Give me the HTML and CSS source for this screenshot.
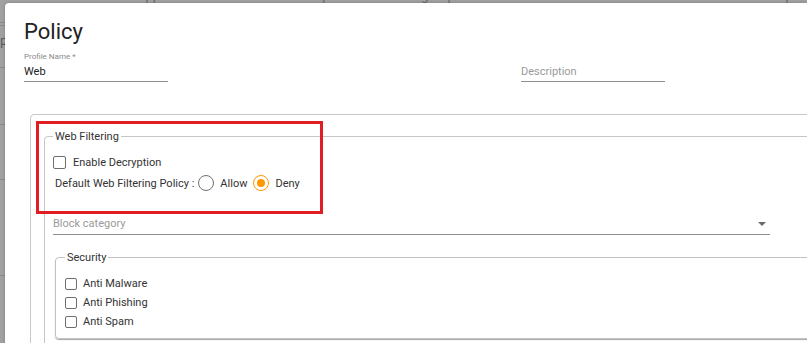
FILE: index.html
```html
<!DOCTYPE html>
<html>
<head>
<meta charset="utf-8">
<link rel="stylesheet" href="styles.css">
</head>
<body>
<div class="backdrop">
  <div class="bg-head">
    <span>Clients</span><span>Applications</span><span>SSL Bump</span><span>Usergroups</span><span>Time</span><span>Profiles</span><span>Captive</span>
  </div>
  <div class="bg-row r1"></div>
  <div class="bg-row r2"></div>
  <div class="bg-row r3"><span class="bg-text">Op</span></div>
  <div class="bg-row r4"></div>
  <div class="bg-row r5"></div>
  <div class="bg-row r6"></div>
</div>

<div class="modal">
  <h1 class="title">Policy</h1>
  <div class="fields">
    <div class="field">
      <div class="field-label">Profile Name *</div>
      <div class="field-input">Web</div>
    </div>
    <div class="field">
      <div class="field-label"></div>
      <div class="field-input placeholder">Description</div>
    </div>
  </div>

  <div class="outer-box">
    <fieldset class="group wf">
      <legend>Web Filtering</legend>
      <div class="row check-row">
        <span class="checkbox big"></span><span>Enable Decryption</span>
      </div>
      <div class="row policy-row">
        <span class="policy-label">Default Web Filtering Policy :</span>
        <span class="radio"></span><span class="radio-label">Allow</span>
        <span class="radio on"></span><span class="radio-label">Deny</span>
      </div>
      <div class="select">
        <span class="placeholder">Block category</span>
        <span class="arrow"></span>
      </div>
      <fieldset class="group security">
        <legend>Security</legend>
        <div class="row check-row"><span class="checkbox"></span><span>Anti Malware</span></div>
        <div class="row check-row"><span class="checkbox"></span><span>Anti Phishing</span></div>
        <div class="row check-row"><span class="checkbox"></span><span>Anti Spam</span></div>
      </fieldset>
    </fieldset>
  </div>
</div>

<div class="annotation"></div>
</body>
</html>
```

FILE: styles.css
```css
html, body {
  margin: 0;
  padding: 0;
}
body {
  position: relative;
  width: 807px;
  height: 343px;
  overflow: hidden;
  background: #a1a1a1;
  font-family: Roboto, "Liberation Sans", sans-serif;
  color: #333;
}

/* page behind the dialog */
.backdrop {
  display: flex;
  flex-direction: column;
}
.bg-head {
  display: grid;
  grid-template-columns: 120px 133px 125px 133px 129px 113px 80px;
  padding-left: 17px;
  margin-top: -11px;
  height: 14px;
  font-size: 13px;
  line-height: 14px;
  color: #6a6a6a;
  white-space: nowrap;
  overflow: hidden;
}
.bg-row {
  border-bottom: 1px solid #8c8c8c;
  position: relative;
  overflow: hidden;
}
.r1 { height: 19px; }
.r2 { height: 2px; }
.r3 { height: 41px; }
.r4 { height: 56px; }
.r5 { height: 54px; }
.r6 { height: 95px; }
.bg-text {
  display: block;
  margin-left: -8px;
  margin-top: 8px;
  font-size: 12px;
  line-height: 14px;
  color: #555;
}

/* dialog */
.modal {
  position: absolute;
  left: 5px;
  top: 3px;
  width: 1000px;
  height: 420px;
  background: #fff;
  border-radius: 4px 0 0 0;
  box-shadow: 0 0 3px rgba(0, 0, 0, 0.25);
  padding: 16px 0 0 19px;
  box-sizing: border-box;
}
.title {
  margin: 0;
  font-size: 22px;
  line-height: 26px;
  font-weight: 400;
  color: #222;
}
.fields {
  display: flex;
  gap: 353px;
  margin-top: 7px;
}
.field {
  width: 144px;
}
.field-label {
  height: 10px;
  font-size: 8px;
  line-height: 10px;
  color: #8a8a8a;
}
.field-input {
  font-size: 11px;
  line-height: 14px;
  padding: 3px 0 2px;
  border-bottom: 1px solid #8f8f8f;
  color: #222;
}
.placeholder {
  color: #9a9a9a;
}

.outer-box {
  margin: 32px 0 0 6px;
  border: 1px solid #c8c8c8;
  border-radius: 4px;
  padding: 15px 0 0 13px;
  height: 300px;
}

.group {
  margin: 0;
  border: 1px solid #c6c6c6;
  border-radius: 4px;
  min-width: 0;
}
.group legend {
  padding: 0 2px;
  font-size: 11px;
  line-height: 13px;
  color: #333;
}
.wf {
  padding: 10px 0 40px 8px;
}

.row {
  display: flex;
  align-items: center;
  font-size: 11px;
  color: #333;
}
.check-row {
  height: 19px;
  gap: 7px;
}
.checkbox {
  width: 12px;
  height: 12px;
  box-sizing: border-box;
  border: 1px solid #6e6e6e;
  border-radius: 2px;
  background: #fff;
}
.checkbox.big {
  width: 13px;
  height: 13px;
}
.policy-row {
  height: 22px;
  padding-left: 2px;
}
.policy-label {
  margin-right: 4px;
}
.radio {
  width: 16px;
  height: 16px;
  box-sizing: border-box;
  border: 1.5px solid #707070;
  border-radius: 50%;
  display: flex;
  align-items: center;
  justify-content: center;
  margin-right: 6px;
}
.radio-label {
  margin-right: 6px;
}
.radio.on {
  border-color: #ff9800;
}
.radio.on::after {
  content: "";
  width: 8px;
  height: 8px;
  border-radius: 50%;
  background: #ff9800;
}

.select {
  margin-top: 23px;
  width: 717px;
  display: flex;
  justify-content: space-between;
  align-items: center;
  font-size: 11px;
  line-height: 14px;
  padding: 0 4px 3px 0;
  box-sizing: border-box;
  border-bottom: 1px solid #8f8f8f;
}
.arrow {
  width: 0;
  height: 0;
  border-left: 4px solid transparent;
  border-right: 4px solid transparent;
  border-top: 4px solid #6a6a6a;
}

.security {
  margin: 16px 0 0 2px;
  padding: 10px 0 7px 9px;
  border-color: #c2c2c2;
  box-shadow: 0 1px 1px rgba(0, 0, 0, 0.35);
}
.security .check-row {
  gap: 6px;
}

/* red highlight annotation lying over the form */
.annotation {
  position: absolute;
  left: 36px;
  top: 121px;
  width: 287px;
  height: 93px;
  box-sizing: border-box;
  border: 3px solid #e11d24;
}
```
